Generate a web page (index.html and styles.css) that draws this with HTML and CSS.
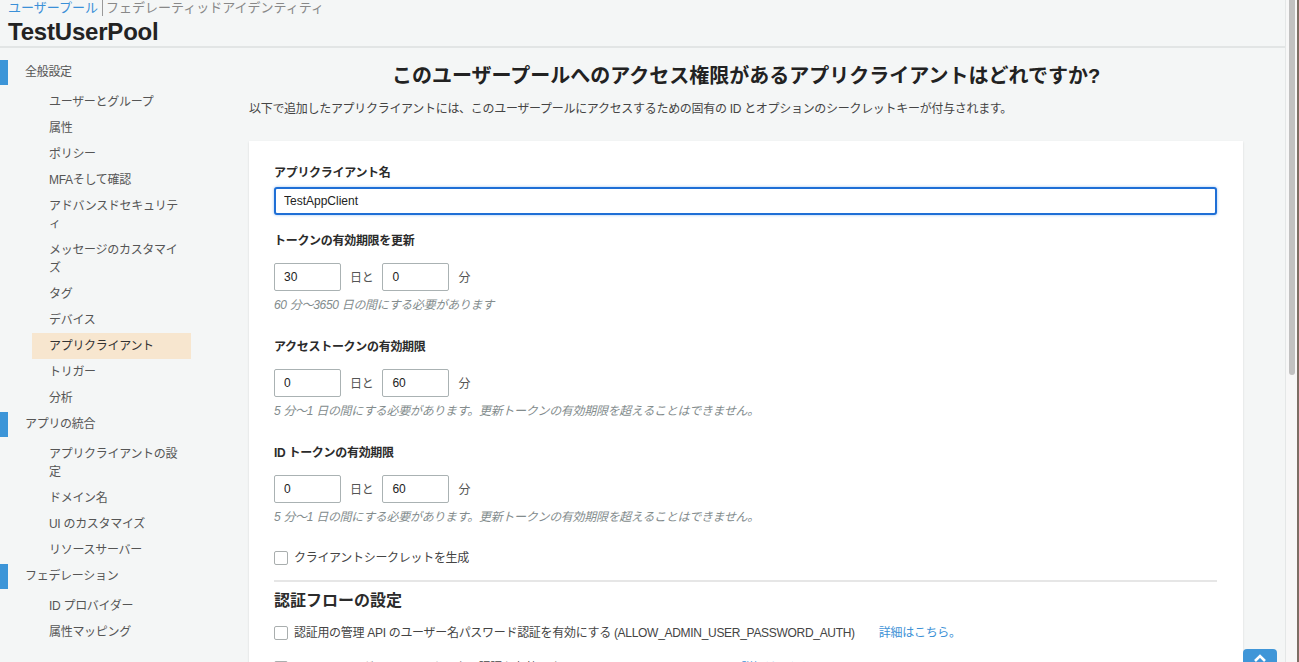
FILE: index.html
```html
<!DOCTYPE html>
<html lang="ja">
<head>
<meta charset="utf-8">
<title>TestUserPool - アプリクライアント</title>
<link rel="stylesheet" href="styles.css">
</head>
<body>
<div class="page">
  <header class="top">
    <div class="crumbs"><a class="crumb-link">ユーザープール</a><span class="crumb-sep"></span><span class="crumb-muted">フェデレーティッドアイデンティティ</span></div>
    <h1 class="pool-title">TestUserPool</h1>
  </header>
  <div class="layout">
    <nav class="sidebar">
      <div class="nav-head first">全般設定</div>
      <ul class="nav-list">
        <li class="nav-item">ユーザーとグループ</li>
        <li class="nav-item">属性</li>
        <li class="nav-item">ポリシー</li>
        <li class="nav-item">MFAそして確認</li>
        <li class="nav-item">アドバンスドセキュリティ</li>
        <li class="nav-item">メッセージのカスタマイズ</li>
        <li class="nav-item">タグ</li>
        <li class="nav-item">デバイス</li>
        <li class="nav-item active">アプリクライアント</li>
        <li class="nav-item">トリガー</li>
        <li class="nav-item">分析</li>
      </ul>
      <div class="nav-head">アプリの統合</div>
      <ul class="nav-list">
        <li class="nav-item">アプリクライアントの設定</li>
        <li class="nav-item">ドメイン名</li>
        <li class="nav-item">UI のカスタマイズ</li>
        <li class="nav-item">リソースサーバー</li>
      </ul>
      <div class="nav-head">フェデレーション</div>
      <ul class="nav-list">
        <li class="nav-item">ID プロバイダー</li>
        <li class="nav-item">属性マッピング</li>
      </ul>
    </nav>
    <main class="main">
      <h2 class="question">このユーザープールへのアクセス権限があるアプリクライアントはどれですか?</h2>
      <p class="intro">以下で追加したアプリクライアントには、このユーザープールにアクセスするための固有の ID とオプションのシークレットキーが付与されます。</p>
      <section class="card">
        <label class="field-label first">アプリクライアント名</label>
        <input class="text-input" type="text" value="TestAppClient">

        <label class="field-label">トークンの有効期限を更新</label>
        <div class="duration">
          <input class="num-input" type="text" value="30"><span class="unit">日と</span><input class="num-input" type="text" value="0"><span class="unit">分</span>
        </div>
        <p class="hint">60 分〜3650 日の間にする必要があります</p>

        <label class="field-label">アクセストークンの有効期限</label>
        <div class="duration">
          <input class="num-input" type="text" value="0"><span class="unit">日と</span><input class="num-input" type="text" value="60"><span class="unit">分</span>
        </div>
        <p class="hint">5 分〜1 日の間にする必要があります。更新トークンの有効期限を超えることはできません。</p>

        <label class="field-label">ID トークンの有効期限</label>
        <div class="duration">
          <input class="num-input" type="text" value="0"><span class="unit">日と</span><input class="num-input" type="text" value="60"><span class="unit">分</span>
        </div>
        <p class="hint">5 分〜1 日の間にする必要があります。更新トークンの有効期限を超えることはできません。</p>

        <div class="check-row secret"><span class="box"></span><span>クライアントシークレットを生成</span></div>

        <hr class="divider">

        <h3 class="sub-head">認証フローの設定</h3>
        <div class="check-row flow"><span class="box"></span><span>認証用の管理 API のユーザー名パスワード認証を有効にする (ALLOW_ADMIN_USER_PASSWORD_AUTH)</span><a class="more">詳細はこちら。</a></div>
        <div class="check-row flow next"><span class="box"></span><span>Lambda トリガーベースのカスタム認証を有効にする (ALLOW_CUSTOM_AUTH)</span><a class="more">詳細はこちら。</a></div>
      </section>
    </main>
  </div>
  <button class="to-top" aria-label="トップへ"><svg width="14" height="10" viewBox="0 0 14 10"><path d="M2 8 L7 3 L12 8" fill="none" stroke="#fff" stroke-width="2.6"/></svg></button>
</div>
<div class="scrollbar"><div class="thumb"></div></div>
</body>
</html>
```
FILE: styles.css
```css
* { box-sizing: border-box; }
html, body { margin: 0; padding: 0; height: 100%; }
body {
  display: flex;
  overflow: hidden;
  background: #f4f6f6;
  font-family: "Liberation Sans", "Noto Sans CJK JP", sans-serif;
  font-size: 12px;
  letter-spacing: -0.3px;
  color: #444;
}
.page {
  position: relative;
  width: 1286px;
  height: 662px;
  border-right: 1px solid #e4e7e7;
  overflow: hidden;
}
.scrollbar {
  width: 13px;
  height: 662px;
  background: #f7f7f7;
  border-right: 2px solid #7d6e64;
  padding-left: 3px;
}
.thumb {
  width: 6px;
  height: 375px;
  background: #c1c1c1;
  border-radius: 0 0 3px 3px;
}

/* header */
.top {
  height: 48px;
  padding-left: 8px;
  border-bottom: 2px solid #e2e5e5;
}
.crumbs {
  height: 16px;
  line-height: 16px;
  font-size: 13px;
  letter-spacing: 0;
  display: flex;
  align-items: center;
}
.crumb-link { color: #3b90d8; }
.crumb-sep {
  display: inline-block;
  width: 1px;
  height: 16px;
  background: #999;
  margin: 0 3px 0 4px;
}
.crumb-muted { color: #888; }
.pool-title {
  margin: 2px 0 0;
  font-size: 24px;
  line-height: 28px;
  font-weight: bold;
  color: #232323;
  letter-spacing: -0.2px;
}

/* layout */
.layout { display: flex; }

.sidebar {
  width: 200px;
  flex: none;
  padding-top: 12px;
}
.nav-head {
  height: 25px;
  line-height: 25px;
  border-left: 8px solid #3c95d8;
  padding-left: 17px;
  margin-top: 1px;
  margin-bottom: 4px;
  color: #555;
}
.nav-head.first { margin-top: 0; }
.nav-list {
  list-style: none;
  margin: 0;
  padding: 0;
}
.nav-item {
  width: 159px;
  margin-left: 32px;
  padding: 4px 5px 4px 17px;
  line-height: 18px;
  color: #555;
}
.nav-item.active {
  background: #f7e6cf;
  color: #333;
}

/* main */
.main {
  width: 994px;
  margin-left: 49px;
  padding-top: 14px;
}
.question {
  margin: 0;
  text-align: center;
  font-size: 20px;
  line-height: 28px;
  font-weight: bold;
  color: #222;
  letter-spacing: 0;
}
.intro {
  margin: 10px 0 0;
  line-height: 18px;
  color: #444;
}
.card {
  margin-top: 23px;
  background: #fff;
  padding: 23px 26px 40px 25px;
  box-shadow: 0 1px 2px rgba(0, 0, 0, 0.12);
  height: 600px;
}
.field-label {
  display: block;
  margin-top: 17px;
  line-height: 18px;
  font-weight: bold;
  color: #2b2b2b;
}
.field-label.first { margin-top: 0; }
.text-input {
  display: block;
  width: 100%;
  height: 28px;
  margin-top: 5px;
  padding: 0 8px;
  border: 2px solid #1f6fd6;
  border-radius: 3px;
  box-shadow: 0 0 3px rgba(30, 120, 230, 0.45);
  font: inherit;
  letter-spacing: 0;
  color: #222;
  outline: none;
}
.duration {
  display: flex;
  align-items: center;
  margin-top: 13px;
}
.num-input {
  width: 67px;
  height: 28px;
  padding: 0 9px;
  border: 1px solid #aab2b3;
  border-radius: 2px;
  font: inherit;
  letter-spacing: 0;
  color: #222;
  outline: none;
}
.unit {
  margin: 0 9px;
  color: #555;
  position: relative;
  top: -1px;
}
.hint {
  margin: 5px 0 0;
  line-height: 18px;
  font-style: italic;
  color: #838c8d;
}
.hint + .field-label { margin-top: 24px; }
.check-row {
  display: flex;
  align-items: center;
  line-height: 18px;
  color: #444;
}
.check-row.secret { margin-top: 23px; }
.box {
  width: 14px;
  height: 14px;
  border: 1px solid #a9aeae;
  border-radius: 2px;
  margin-right: 6px;
  flex: none;
  background: #fff;
}
.divider {
  border: 0;
  border-top: 2px solid #e6e6e6;
  margin: 13px 0 0;
}
.sub-head {
  margin: 8px 0 0;
  font-size: 16px;
  line-height: 22px;
  font-weight: bold;
  color: #2b2b2b;
  letter-spacing: 0;
}
.check-row.flow { margin-top: 12px; }
.check-row.next { margin-top: 17px; }
.more {
  margin-left: 24px;
  color: #3d91d6;
}
.to-top {
  position: absolute;
  left: 1243px;
  top: 649px;
  width: 34px;
  height: 30px;
  border: 0;
  border-radius: 4px;
  background: #3f96d8;
  padding: 4px 0 0;
  display: flex;
  justify-content: center;
}
```
